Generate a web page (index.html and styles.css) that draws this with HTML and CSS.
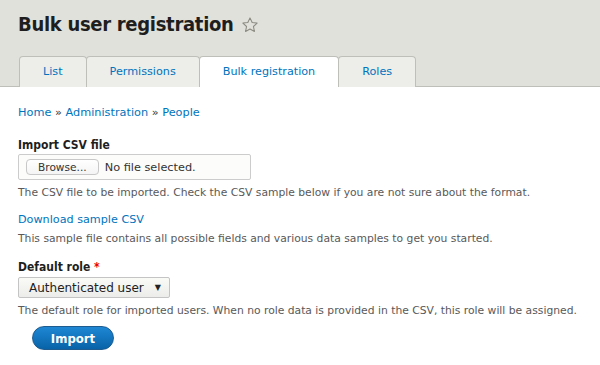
FILE: index.html
```html
<!DOCTYPE html>
<html lang="en">
<head>
    <meta charset="UTF-8">
    <title>Bulk user registration</title>
    <link rel="stylesheet" href="styles.css">
</head>
<body>
    <div class="page-header">
        <h1>Bulk user registration
            <svg class="star" width="18" height="18" viewBox="0 0 24 24">
                <path d="M12 2.5l2.9 6.1 6.6.8-4.9 4.6 1.3 6.6L12 17.3l-5.9 3.3 1.3-6.6-4.9-4.6 6.6-.8z" fill="none" stroke="#8a8a82" stroke-width="1.4" stroke-linejoin="round"/>
            </svg>
        </h1>
        <ul class="tabs">
            <li><a href="#">List</a></li>
            <li><a href="#">Permissions</a></li>
            <li class="active"><a href="#">Bulk registration</a></li>
            <li><a href="#">Roles</a></li>
        </ul>
    </div>

    <div class="content">
        <div class="breadcrumb">
            <a href="#">Home</a> » <a href="#">Administration</a> » <a href="#">People</a>
        </div>

        <!-- CSV soubor -->
        <div class="form-item file">
            <label>Import CSV file</label>
            <div class="file-input">
                <span class="browse">Browse...</span>
                <span>No file selected.</span>
            </div>
            <div class="description">The CSV file to be imported. Check the CSV sample below if you are not sure about the format.</div>
        </div>

        <div class="form-item sample">
            <a href="#" class="sample-link">Download sample CSV</a>
            <div class="description">This sample file contains all possible fields and various data samples to get you started.</div>
        </div>

        <!-- Role -->
        <div class="form-item last">
            <label>Default role <span class="required">*</span></label>
            <div class="select">
                <span>Authenticated user</span>
                <span class="arrow">▼</span>
            </div>
            <div class="description">The default role for imported users. When no role data is provided in the CSV, this role will be assigned.</div>
        </div>

        <button class="button-primary">Import</button>
    </div>
</body>
</html>
```

FILE: styles.css
```css
body {
    margin: 0;
    font-family: "DejaVu Sans", sans-serif;
    font-size: 12px;
    color: #333;
    background: #fff;
}
a {
    color: #0074bd;
    text-decoration: none;
}
.page-header {
    background-color: #e1e1db;
    padding: 12px 18px 0;
    border-bottom: 1px solid #bfbfba;
}
h1 {
    margin: 0;
    font-family: "DejaVu Sans Condensed", "DejaVu Sans", sans-serif;
    font-stretch: condensed;
    font-size: 20px;
    letter-spacing: -0.3px;
    font-weight: bold;
    color: #1e1e1e;
    line-height: 24px;
    display: flex;
    align-items: center;
    gap: 7px;
}
.star {
    margin-top: 1px;
}
/* Taby */
.tabs {
    list-style: none;
    margin: 20px 0 -1px 1px;
    padding: 0;
    display: flex;
}
.tabs li {
    border: 1px solid #bfbfba;
    border-bottom: none;
    border-radius: 4px 4px 0 0;
    background-color: #ededea;
    margin-right: -1px;
}
.tabs li a {
    display: block;
    padding: 0 23px;
    line-height: 29px;
    font-size: 11.2px;
}
.tabs li.active {
    background-color: #fff;
    position: relative;
    z-index: 1;
    height: 30px;
}
.content {
    padding: 19px 18px 16px;
}
.breadcrumb {
    font-size: 11.3px;
    color: #333;
    margin-bottom: 19px;
}
.form-item {
    margin-bottom: 13px;
}
.form-item.sample {
    margin-bottom: 15px;
}
.form-item.last {
    margin-bottom: 9px;
}
.form-item label {
    display: block;
    font-family: "DejaVu Sans Condensed", "DejaVu Sans", sans-serif;
    font-stretch: condensed;
    font-weight: bold;
    font-size: 12px;
    color: #1e1e1e;
    margin-bottom: 3px;
}
.form-item.file label {
    margin-bottom: 2px;
}
.required {
    color: #e00;
}
.file-input {
    display: flex;
    align-items: center;
    gap: 6px;
    width: 220px;
    height: 24px;
    padding: 0 4px 0 7px;
    border: 1px solid #ccc;
    border-radius: 2px;
    background-color: #fcfcfa;
    font-size: 11.3px;
    color: #333;
}
.browse {
    border: 1px solid #c8c8c8;
    border-radius: 4px;
    background: linear-gradient(#fff, #f4f4f4);
    padding: 1px 11px;
    font-size: 10.6px;
}
.description {
    margin-top: 6px;
    font-size: 10.75px;
    color: #595959;
}
.sample-link {
    font-size: 11.2px;
}
.select {
    display: flex;
    justify-content: space-between;
    align-items: center;
    width: 132px;
    height: 19px;
    padding: 0 8px 0 10px;
    border: 1px solid #c4c4c4;
    border-radius: 2px;
    background: linear-gradient(#fafaf7, #ececea);
    font-size: 12px;
    color: #222;
}
.arrow {
    font-size: 8px;
}
.button-primary {
    margin-left: 14px;
    width: 82px;
    height: 24px;
    border: 1px solid #1e5c90;
    border-radius: 12px;
    background: linear-gradient(#1e87d4, #0863a8);
    color: #fff;
    font-family: "DejaVu Sans Condensed", "DejaVu Sans", sans-serif;
    font-stretch: condensed;
    font-weight: bold;
    font-size: 13px;
}
```
